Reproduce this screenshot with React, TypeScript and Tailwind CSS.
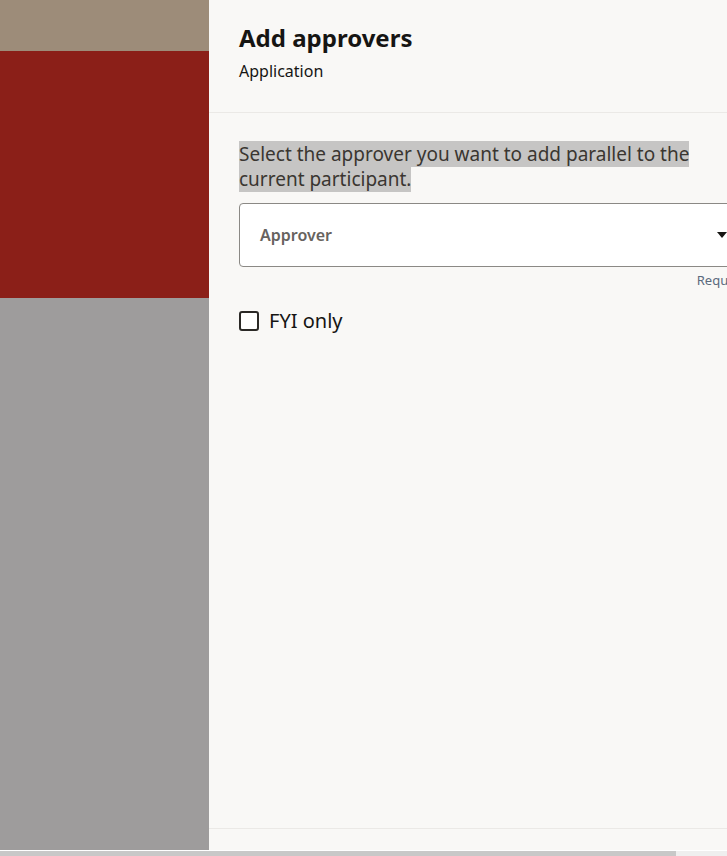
import { useState } from 'react';

export default function App() {
  const [fyi, setFyi] = useState(false);

  return (
    <div className="relative h-[856px] w-[727px] overflow-hidden bg-[#f9f8f6] font-['Noto_Sans',sans-serif]">
      <div className="flex h-[850px]">
        {/* backdrop behind the drawer */}
        <div className="flex w-[209px] shrink-0 flex-col">
          <div className="h-[51px] bg-[#9d8c79]" />
          <div className="h-[247px] bg-[#8b1f18]" />
          <div className="flex-1 bg-[#9e9c9c]" />
        </div>

        {/* drawer */}
        <div className="flex w-[573px] shrink-0 flex-col bg-[#f9f8f6]">
          <div className="border-b border-[#ebe9e6] px-[30px] pt-[23px] pb-[30px]">
            <h1 className="text-[24px] font-bold leading-[30px] text-[#161513]">Add approvers</h1>
            <p className="mt-[7px] text-[16px] leading-[22px] text-[#161513]">Application</p>
          </div>

          <div className="flex-1 px-[30px] pt-[29px]">
            <p className="text-[19px] leading-[25px] text-[#3a3631]">
              <span className="bg-[#c6c5c4]">Select the approver you want to add parallel to the current participant.</span>
            </p>

            <button className="mt-[11px] flex h-[64px] w-full items-center justify-between rounded-[4px] border border-[#8b8985] bg-white pl-[20px] pr-[22px] text-left">
              <span className="text-[16px] font-semibold text-[#67635e]">Approver</span>
              <svg width="10" height="6" viewBox="0 0 10 6" className="mr-[2px]">
                <path d="M0 0h10L5 6z" fill="#161513" />
              </svg>
            </button>
            <div className="mt-[5px] text-right text-[13px] leading-[17px] text-[#5b6a7d]">Required</div>

            <label className="mt-[19px] flex cursor-pointer items-center gap-[10px]">
              <span
                onClick={() => setFyi(!fyi)}
                className="flex h-[20px] w-[20px] items-center justify-center rounded-[3px] border-2 border-[#2b2926] bg-white"
              >
                {fyi && (
                  <svg width="12" height="10" viewBox="0 0 12 10">
                    <path d="M1 5l3.5 3.5L11 1" stroke="#161513" strokeWidth="2" fill="none" />
                  </svg>
                )}
              </span>
              <span className="text-[20px] leading-[26px] text-[#161513]">FYI only</span>
            </label>
          </div>

          <div className="h-[22px] border-t border-[#ebe9e6]" />
        </div>
      </div>

      {/* horizontal scrollbar */}
      <div className="border-t border-white bg-[#efefef]">
        <div className="h-[5px] w-[676px] bg-[#c8c8c8]" />
      </div>
    </div>
  );
}
